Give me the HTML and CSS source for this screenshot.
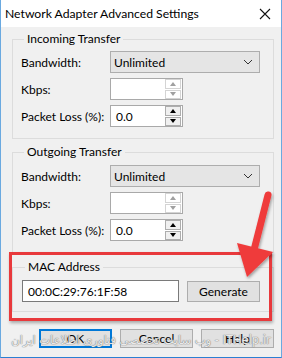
FILE: index.html
```html
<!DOCTYPE html>
<html>
<head>
<meta charset="utf-8">
<link rel="stylesheet" href="styles.css">
</head>
<body>
<div class="window">
  <div class="titlebar">
    <span class="title">Network Adapter Advanced Settings</span>
    <svg class="close" width="12" height="12" viewBox="0 0 12 12"><path d="M1 1L11 11M11 1L1 11" stroke="#111" stroke-width="1.1" fill="none"/></svg>
  </div>
  <div class="content">
    <fieldset class="group">
      <legend>Incoming Transfer</legend>
      <div class="row">
        <span class="lbl">Bandwidth:</span>
        <div class="combo"><span>Unlimited</span><svg width="10" height="6" viewBox="0 0 10 6"><path d="M1 1L5 5L9 1" stroke="#333" stroke-width="1" fill="none"/></svg></div>
      </div>
      <div class="row">
        <span class="lbl">Kbps:</span>
        <div class="spin"><span class="val"></span><div class="sbtns dis"><span class="sb"><i class="up"></i></span><span class="sb"><i class="dn"></i></span></div></div>
      </div>
      <div class="row">
        <span class="lbl">Packet Loss (%):</span>
        <div class="spin"><span class="val">0.0</span><div class="sbtns"><span class="sb"><i class="up"></i></span><span class="sb"><i class="dn"></i></span></div></div>
      </div>
    </fieldset>
    <fieldset class="group g2">
      <legend>Outgoing Transfer</legend>
      <div class="row">
        <span class="lbl">Bandwidth:</span>
        <div class="combo"><span>Unlimited</span><svg width="10" height="6" viewBox="0 0 10 6"><path d="M1 1L5 5L9 1" stroke="#333" stroke-width="1" fill="none"/></svg></div>
      </div>
      <div class="row">
        <span class="lbl">Kbps:</span>
        <div class="spin"><span class="val"></span><div class="sbtns dis"><span class="sb"><i class="up"></i></span><span class="sb"><i class="dn"></i></span></div></div>
      </div>
      <div class="row">
        <span class="lbl">Packet Loss (%):</span>
        <div class="spin"><span class="val">0.0</span><div class="sbtns"><span class="sb"><i class="up"></i></span><span class="sb"><i class="dn"></i></span></div></div>
      </div>
    </fieldset>
    <fieldset class="group gmac">
      <legend>MAC Address</legend>
      <div class="macrow">
        <div class="textbox">00:0C:29:76:1F:58</div>
        <div class="btn gen">Generate</div>
      </div>
    </fieldset>
    <div class="buttons">
      <div class="btn dlg ok">OK</div>
      <div class="btn dlg">Cancel</div>
      <div class="btn dlg">Help</div>
    </div>
    <div class="highlight"></div>
    <svg class="arrow" width="282" height="358" viewBox="0 0 282 358">
      <defs>
        <filter id="sh" x="-20%" y="-20%" width="140%" height="140%">
          <feDropShadow dx="1" dy="2" stdDeviation="1.5" flood-color="#000" flood-opacity="0.35"/>
        </filter>
      </defs>
      <g filter="url(#sh)" fill="#ef3b3b">
        <path d="M268 195L254 250" stroke="#ef3b3b" stroke-width="7" stroke-linecap="round"/>
        <polygon points="237,243 273,252 247,277"/>
      </g>
    </svg>
    <div class="watermark" dir="rtl">ITHelp.ir - وب سایت تخصصی فناوری اطلاعات ایران</div>
  </div>
</div>
</body>
</html>
```

FILE: styles.css
```css
* { box-sizing: border-box; }
html, body { margin: 0; padding: 0; }
body {
  width: 282px;
  height: 358px;
  overflow: hidden;
  font-family: Lato, "Noto Sans", sans-serif;
  font-size: 12px;
  color: #000;
  background: #f0f0f0;
}
.window {
  position: relative;
  width: 282px;
  height: 358px;
  border-left: 1px solid #6aa9e0;
  border-right: 1px solid #6aa9e0;
  border-bottom: 1px solid #2b7fd2;
  background: #f0f0f0;
  display: flex;
  flex-direction: column;
}
.titlebar {
  height: 27px;
  background: #fff;
  display: flex;
  align-items: center;
  justify-content: space-between;
  padding: 0 10px 0 4px;
  margin: 0 -1px;
  border-left: 1px solid #6aa9e0;
  border-right: 1px solid #6aa9e0;
}
.title {
  font-size: 12.2px;
  line-height: 14px;
  color: #000;
}
.close { display: block; }
.content {
  position: relative;
  flex: 1;
  padding: 5px 7px 0 11px;
  display: flex;
  flex-direction: column;
}
.group {
  margin: 0;
  border: 1px solid #dcdcdc;
  padding: 5px 0 11px 8px;
  min-width: 0;
}
.group legend {
  padding: 0 3px;
  margin-left: 3px;
  line-height: 14px;
}
.g2 { margin-top: 6px; padding-top: 6px; }
.row {
  display: flex;
  align-items: center;
  height: 22px;
}
.row + .row { margin-top: 5px; }
.lbl {
  width: 89px;
  flex: none;
  white-space: nowrap;
}
.combo {
  width: 150px;
  height: 22px;
  background: #e5e5e5;
  border: 1px solid #adadad;
  display: flex;
  align-items: center;
  justify-content: space-between;
  padding: 0 6px 0 3px;
}
.combo svg { display: block; }
.spin {
  width: 73px;
  height: 22px;
  background: #fff;
  border: 1px solid #a9a9a9;
  display: flex;
  align-items: center;
  padding: 0 0 0 5px;
}
.val { flex: 1; }
.sbtns {
  width: 17px;
  height: 20px;
  display: flex;
  flex-direction: column;
  gap: 1px;
  padding: 0 1px 0 0;
}
.sb {
  flex: 1;
  border: 1px solid #adadad;
  background: #f0f0f0;
  display: flex;
  align-items: center;
  justify-content: center;
}
.sb i {
  display: block;
  width: 0;
  height: 0;
  border-left: 3.5px solid transparent;
  border-right: 3.5px solid transparent;
}
.sb i.up { border-bottom: 4px solid #000; }
.sb i.dn { border-top: 4px solid #000; }
.sbtns.dis .sb { background: #fff; border-color: #d4d4d4; }
.sbtns.dis .sb i.up { border-bottom-color: #a0a0a0; }
.sbtns.dis .sb i.dn { border-top-color: #a0a0a0; }
.gmac {
  margin-top: 7px;
  padding: 6px 0 9px 9px;
}
.macrow {
  display: flex;
  align-items: center;
  gap: 8px;
}
.textbox {
  width: 157px;
  height: 22px;
  background: #fff;
  border: 1px solid #7a7a7a;
  display: flex;
  align-items: center;
  padding-left: 5px;
}
.btn {
  background: #e1e1e1;
  border: 1px solid #adadad;
  display: flex;
  align-items: center;
  justify-content: center;
}
.gen { width: 73px; height: 21px; }
.buttons {
  margin-top: 17px;
  display: flex;
  justify-content: flex-end;
  gap: 8px;
}
.dlg { width: 73px; height: 19px; }
.ok { border: 2px solid #0078d7; }
.highlight {
  position: absolute;
  left: 8px;
  top: 225px;
  width: 263px;
  height: 69px;
  border: 3px solid #e8393c;
  box-shadow: 1px 2px 3px rgba(0,0,0,0.3);
}
.arrow {
  position: absolute;
  left: -1px;
  top: -27px;
  pointer-events: none;
}
.watermark {
  position: absolute;
  left: 0;
  right: 0;
  top: 306px;
  text-align: center;
  white-space: nowrap;
  font-family: "DejaVu Sans", sans-serif;
  font-size: 11.5px;
  line-height: 14px;
  color: rgba(255,255,255,0.85);
  text-shadow: 0 0 1px #777, 0 0 1px #777;
}
```
